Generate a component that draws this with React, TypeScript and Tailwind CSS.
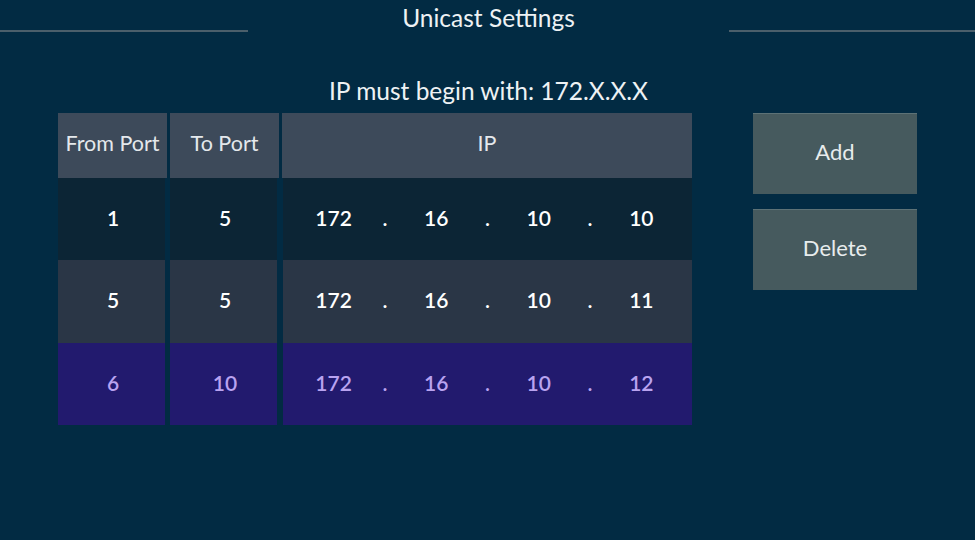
import React from "react";

const rows = [
  { from: "1", to: "5", ip: ["172", "16", "10", "10"], bg: "bg-[#0c2535]", text: "text-white" },
  { from: "5", to: "5", ip: ["172", "16", "10", "11"], bg: "bg-[#2a3646]", text: "text-white" },
  { from: "6", to: "10", ip: ["172", "16", "10", "12"], bg: "bg-[#221a6e]", text: "text-[#b9a3f0]" },
];

export default function App() {
  return (
    <div className="w-[975px] h-[540px] bg-[#022b43] font-['Lato','Open_Sans',sans-serif] text-[#eef2f4] overflow-hidden">
      <div className="flex h-[40px]">
        <div className="w-[248px] h-[2px] mt-[30px] bg-[#4b5f6b]" />
        <div className="flex-1 text-center text-[24.5px] leading-[36px]">Unicast Settings</div>
        <div className="w-[246px] h-[2px] mt-[30px] bg-[#4b5f6b]" />
      </div>
      <div className="text-center text-[24.5px] leading-[28px] mt-[37px] pl-[2px]">IP must begin with: 172.X.X.X</div>
      <div className="flex mt-[8px] pl-[58px]">
        <div className="w-[634px] flex flex-col">
          <div className="flex h-[65px] gap-[3px] text-[21.5px] text-[#e4e8ec]">
            <div className="w-[109px] bg-[#3d4a5a] flex items-center justify-center pb-[4px]">From Port</div>
            <div className="w-[109px] bg-[#3d4a5a] flex items-center justify-center pb-[4px]">To Port</div>
            <div className="flex-1 bg-[#3d4a5a] flex items-center justify-center pb-[4px]">IP</div>
          </div>
          {rows.map((r, i) => (
            <div key={i} className={`flex ${i === 1 ? "h-[83px]" : "h-[82px]"} text-[21px] font-semibold ${r.text}`}>
              <div className={`w-[107px] ${r.bg} flex items-center justify-center pb-[3px] pl-[3px]`}>{r.from}</div>
              <div className="w-[5px]" />
              <div className={`w-[107px] ${r.bg} flex items-center justify-center pb-[3px] pl-[3px]`}>{r.to}</div>
              <div className="w-[6px]" />
              <div className={`flex-1 ${r.bg} flex items-center justify-center pb-[3px]`}>
                {[r.ip[0], ".", r.ip[1], ".", r.ip[2], ".", r.ip[3]].map((t, j) => (
                  <div key={j} className="w-[51.3px] text-center">{t}</div>
                ))}
              </div>
            </div>
          ))}
        </div>
        <div className="ml-[61px] flex flex-col gap-[15px]">
          <div className="w-[164px] h-[81px] bg-[#465a5e] border-t border-[#5d7276] flex items-center justify-center pb-[5px] text-[22px] text-[#e8eced]">Add</div>
          <div className="w-[164px] h-[81px] bg-[#465a5e] border-t border-[#5d7276] flex items-center justify-center pb-[5px] text-[22px] text-[#e8eced]">Delete</div>
        </div>
      </div>
    </div>
  );
}
